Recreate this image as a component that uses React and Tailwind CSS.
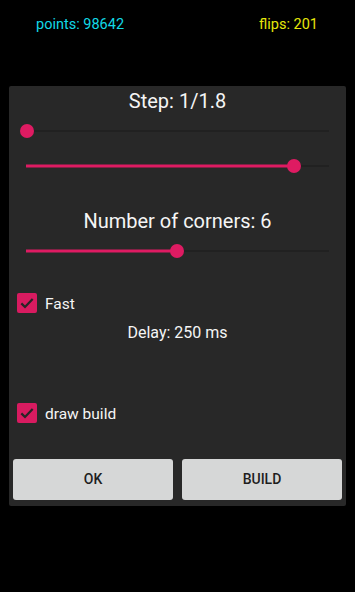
function Slider({ pos, filled, className }) {
  return (
    <div className={`relative mx-[17px] ${className}`}>
      <div className="absolute left-0 right-0 top-1/2 h-px -translate-y-1/2 bg-[#1b1b1b]" />
      {filled && (
        <div
          className="absolute left-0 top-1/2 h-[3px] -translate-y-1/2 bg-[#de1b62]"
          style={{ width: pos }}
        />
      )}
      <div
        className="absolute top-1/2 h-[14px] w-[14px] -translate-x-1/2 -translate-y-1/2 rounded-full bg-[#de1b62]"
        style={{ left: pos }}
      />
    </div>
  )
}

function Check({ label, className }) {
  return (
    <div className={`flex items-center pl-[8px] ${className}`}>
      <div className="flex h-[20px] w-[20px] items-center justify-center rounded-[2px] bg-[#d81b60]">
        <svg width="16" height="16" viewBox="0 0 24 24" fill="none" stroke="#262626" strokeWidth="3.4">
          <path d="M3.5 12.5l5.5 5.5L20.5 6" />
        </svg>
      </div>
      <span className="ml-[8px] pt-[2px] text-[15.5px] leading-[20px] text-[#f5f5f5]">{label}</span>
    </div>
  )
}

export default function App() {
  return (
    <div className="h-[592px] w-[355px] bg-black font-['Roboto',sans-serif]">
      <div className="flex h-[86px] items-start justify-between pl-[36px] pr-[37px] pt-[15px] text-[14.5px] leading-[20px]">
        <span className="text-[#12d8e6]">points: 98642</span>
        <span className="text-[#e6e60a]">flips: 201</span>
      </div>
      <div className="mx-[9px] rounded-[2px] bg-[#282828] pb-[6px] pt-[3px]">
        <div className="h-[24px] text-center text-[20px] leading-[24px] text-[#f5f5f5]">Step: 1/1.8</div>
        <Slider pos={1} className="h-[36px]" />
        <Slider pos={268} filled className="h-[34px]" />
        <div className="mt-[26px] h-[24px] text-center text-[20px] leading-[24px] text-[#f5f5f5]">Number of corners: 6</div>
        <Slider pos={151} filled className="h-[36px]" />
        <Check label="Fast" className="mt-[24px] h-[20px]" />
        <div className="mt-[10px] h-[20px] text-center text-[16px] leading-[20px] text-[#f5f5f5]">Delay: 250 ms</div>
        <Check label="draw build" className="mt-[60px] h-[20px]" />
        <div className="mt-[36px] flex gap-[9px] px-[4px]">
          <button className="h-[41px] flex-1 rounded-[3px] bg-[#d6d7d7] text-[14px] font-medium text-[#1e1e1e]">OK</button>
          <button className="h-[41px] flex-1 rounded-[3px] bg-[#d6d7d7] text-[14px] font-medium text-[#1e1e1e]">BUILD</button>
        </div>
      </div>
    </div>
  )
}
